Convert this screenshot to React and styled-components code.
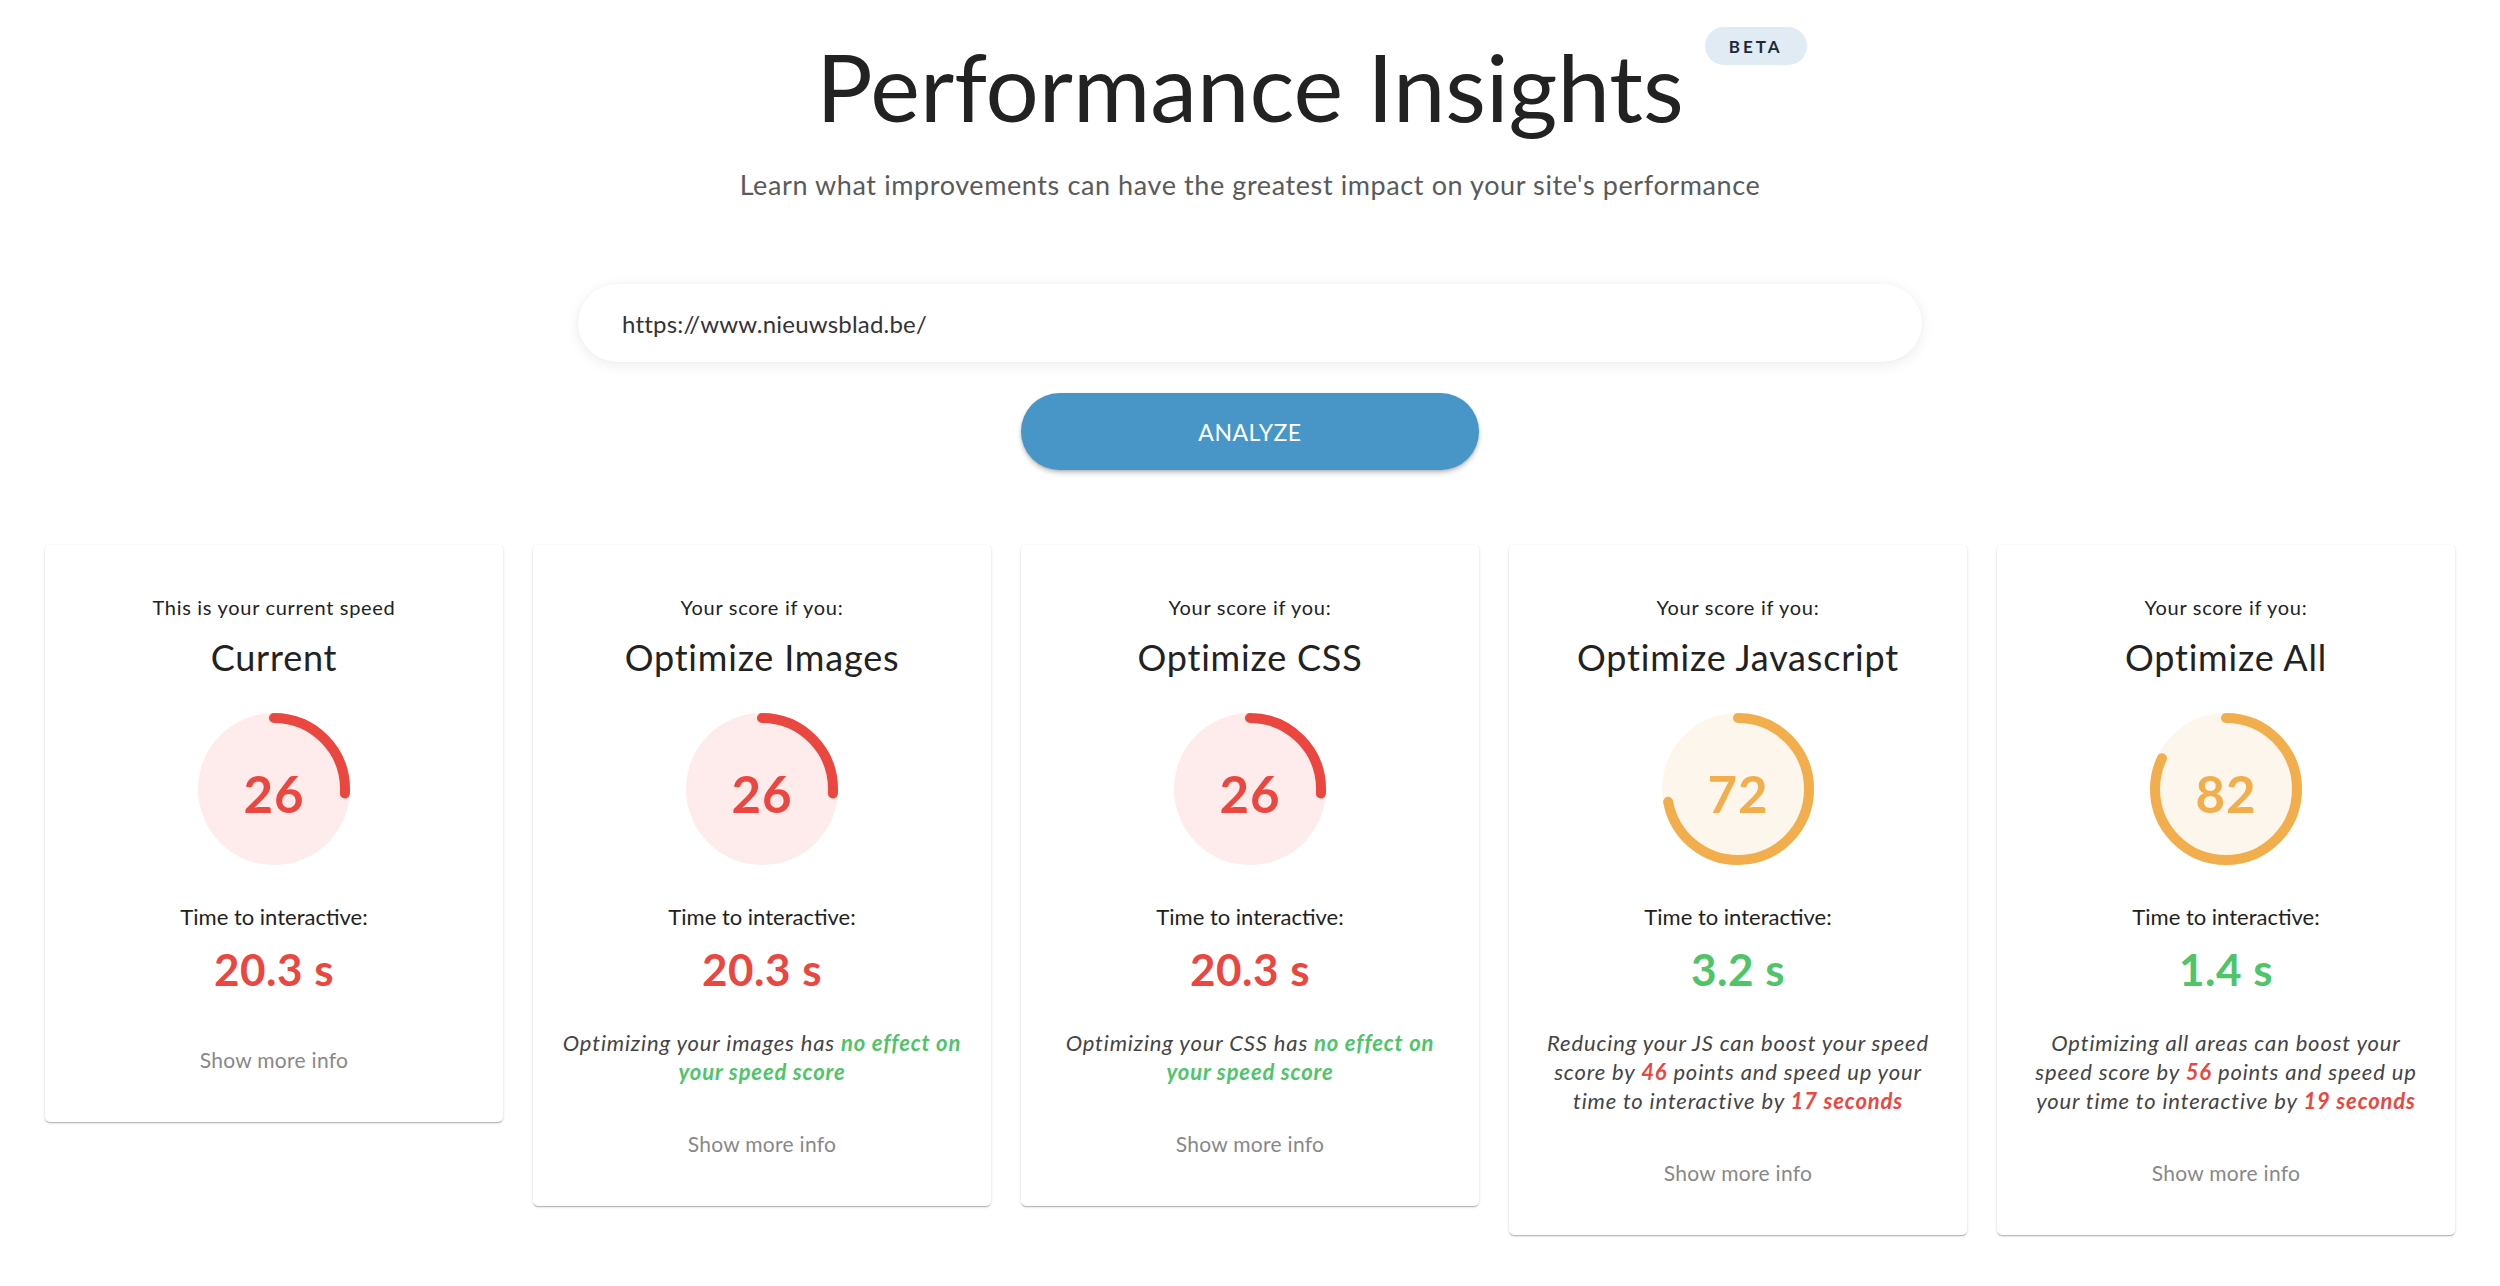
import React from "react";
import styled, { createGlobalStyle } from "styled-components";

const GlobalStyle = createGlobalStyle`
  body {
    margin: 0;
    background: #fff;
    font-family: Lato, "Open Sans", sans-serif;
    color: #222;
  }
`;

const colors = {
  red: "#e9473f",
  redBg: "#fdeceb",
  orange: "#f2ad4c",
  orangeBg: "#fdf6ec",
  green: "#4fc468",
};

const Page = styled.div`
  padding: 30px 45px 60px;
  display: flex;
  flex-direction: column;
  align-items: center;
`;

const TitleWrap = styled.div`
  position: relative;
`;

const Title = styled.h1`
  margin: 0;
  font-size: 94px;
  line-height: 112px;
  font-weight: 400;
  color: #222;
`;

const Badge = styled.span`
  position: absolute;
  left: calc(100% + 21px);
  top: -3px;
  width: 102px;
  height: 38px;
  border-radius: 19px;
  background: #e1ebf4;
  color: #1c2b3a;
  font-size: 17px;
  font-weight: 700;
  letter-spacing: 3px;
  display: flex;
  align-items: center;
  justify-content: center;
`;

const Subtitle = styled.p`
  margin: 25px 0 0;
  font-size: 27px;
  line-height: 36px;
  font-weight: 400;
  letter-spacing: 0.6px;
  color: #5a5a5a;
`;

const UrlInput = styled.input`
  margin-top: 81px;
  width: 1344px;
  height: 78px;
  box-sizing: border-box;
  border: none;
  border-radius: 39px;
  padding: 0 44px;
  font-family: Lato, sans-serif;
  font-size: 24px;
  letter-spacing: 0.2px;
  color: #333;
  background: #fff;
  box-shadow: 0 3px 14px rgba(0, 0, 0, 0.08), 0 0 2px rgba(0, 0, 0, 0.04);
  outline: none;
`;

const AnalyzeButton = styled.button`
  margin-top: 31px;
  width: 458px;
  height: 77px;
  border: none;
  border-radius: 39px;
  background: #4895c7;
  color: #fff;
  font-family: Lato, sans-serif;
  font-size: 23px;
  letter-spacing: 0.5px;
  box-shadow: 0 3px 5px rgba(0, 0, 0, 0.22), 0 1px 2px rgba(0, 0, 0, 0.12);
  cursor: pointer;
`;

const Cards = styled.div`
  margin-top: 75px;
  width: 100%;
  display: grid;
  grid-template-columns: repeat(5, 458px);
  justify-content: space-between;
  align-items: start;
`;

const Card = styled.div`
  background: #fff;
  border-radius: 5px;
  padding: 48px 24px 47px;
  display: flex;
  flex-direction: column;
  align-items: center;
  text-align: center;
  box-shadow: 0 1px 3px rgba(0, 0, 0, 0.16), 0 2px 1px -1px rgba(0, 0, 0, 0.12),
    0 1px 1px rgba(0, 0, 0, 0.1);
`;

const Caption = styled.div`
  font-size: 20px;
  line-height: 28px;
  letter-spacing: 0.7px;
  color: #222;
`;

const CardTitle = styled.h2`
  margin: 14px 0 0;
  font-size: 36px;
  line-height: 44px;
  font-weight: 400;
  letter-spacing: 0.8px;
  color: #222;
`;

const GaugeBox = styled.div`
  position: relative;
  margin-top: 34px;
  width: 152px;
  height: 152px;
`;

const GaugeValue = styled.span`
  position: absolute;
  inset: 0;
  padding-top: 8px;
  display: flex;
  align-items: center;
  justify-content: center;
  font-size: 51px;
  font-weight: 700;
  letter-spacing: 1px;
  color: ${(p) => p.$color};
`;

const Label = styled.div`
  margin-top: 37px;
  font-size: 22px;
  line-height: 30px;
  color: #222;
`;

const Value = styled.div`
  margin-top: 12px;
  font-size: 44px;
  line-height: 50px;
  font-weight: 700;
  letter-spacing: 0.5px;
  color: ${(p) => p.$color};
`;

const Description = styled.p`
  margin: 34px 0 0;
  font-size: 22px;
  line-height: 29px;
  letter-spacing: 0.85px;
  font-style: italic;
  color: #444;

  strong {
    font-weight: 700;
    color: ${(p) => p.$color};
  }
`;

const MoreInfo = styled.a`
  margin-top: ${(p) => (p.$after ? "43px" : "51px")};
  font-size: 21px;
  line-height: 30px;
  letter-spacing: 0.3px;
  color: #888;
  cursor: pointer;
`;

const Gauge = ({ score }) => {
  const bad = score < 50;
  const stroke = bad ? colors.red : colors.orange;
  const bg = bad ? colors.redBg : colors.orangeBg;
  const r = 71;
  const c = 2 * Math.PI * r;
  return (
    <GaugeBox>
      <svg width="152" height="152" viewBox="0 0 152 152">
        <circle cx="76" cy="76" r="76" fill={bg} />
        <circle
          cx="76"
          cy="76"
          r={r}
          fill="none"
          stroke={stroke}
          strokeWidth="10"
          strokeLinecap="round"
          strokeDasharray={`${(score / 100) * c} ${c}`}
          transform="rotate(-90 76 76)"
        />
      </svg>
      <GaugeValue $color={stroke}>{score}</GaugeValue>
    </GaugeBox>
  );
};

const cards = [
  {
    caption: "This is your current speed",
    title: "Current",
    score: 26,
    time: "20.3 s",
    fast: false,
  },
  {
    caption: "Your score if you:",
    title: "Optimize Images",
    score: 26,
    time: "20.3 s",
    fast: false,
    desc: (
      <>
        Optimizing your images has <strong>no effect on your speed score</strong>
      </>
    ),
    descColor: colors.green,
  },
  {
    caption: "Your score if you:",
    title: "Optimize CSS",
    score: 26,
    time: "20.3 s",
    fast: false,
    desc: (
      <>
        Optimizing your CSS has <strong>no effect on your speed score</strong>
      </>
    ),
    descColor: colors.green,
  },
  {
    caption: "Your score if you:",
    title: "Optimize Javascript",
    score: 72,
    time: "3.2 s",
    fast: true,
    desc: (
      <>
        Reducing your JS can boost your speed score by <strong>46</strong>{" "}
        points and speed up your time to interactive by{" "}
        <strong>17 seconds</strong>
      </>
    ),
    descColor: colors.red,
  },
  {
    caption: "Your score if you:",
    title: "Optimize All",
    score: 82,
    time: "1.4 s",
    fast: true,
    desc: (
      <>
        Optimizing all areas can boost your speed score by{" "}
        <strong>56</strong> points and speed up your time to interactive by{" "}
        <strong>19 seconds</strong>
      </>
    ),
    descColor: colors.red,
  },
];

const App = () => (
  <>
    <GlobalStyle />
    <Page>
      <TitleWrap>
        <Title>Performance Insights</Title>
        <Badge>BETA</Badge>
      </TitleWrap>
      <Subtitle>
        Learn what improvements can have the greatest impact on your site's
        performance
      </Subtitle>
      <UrlInput defaultValue="https://www.nieuwsblad.be/" />
      <AnalyzeButton>ANALYZE</AnalyzeButton>
      <Cards>
        {cards.map((card) => (
          <Card key={card.title}>
            <Caption>{card.caption}</Caption>
            <CardTitle>{card.title}</CardTitle>
            <Gauge score={card.score} />
            <Label>Time to interactive:</Label>
            <Value $color={card.fast ? colors.green : colors.red}>
              {card.time}
            </Value>
            {card.desc && (
              <Description $color={card.descColor}>{card.desc}</Description>
            )}
            <MoreInfo $after={!!card.desc}>Show more info</MoreInfo>
          </Card>
        ))}
      </Cards>
    </Page>
  </>
);

export default App;
